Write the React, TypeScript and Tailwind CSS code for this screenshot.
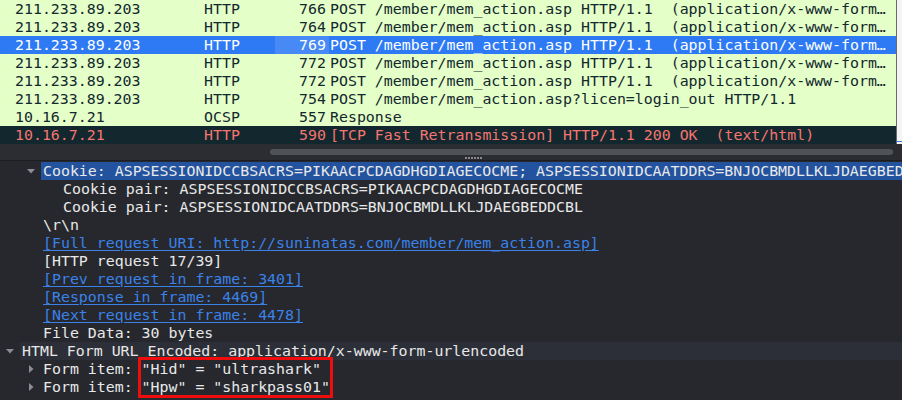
import React from "react";

type Packet = {
  src: string;
  proto: string;
  len: string;
  info: string;
  kind: "http" | "sel" | "bad";
};

const packets: Packet[] = [
  { src: "211.233.89.203", proto: "HTTP", len: "766", info: "POST /member/mem_action.asp HTTP/1.1  (application/x-www-form…", kind: "http" },
  { src: "211.233.89.203", proto: "HTTP", len: "764", info: "POST /member/mem_action.asp HTTP/1.1  (application/x-www-form…", kind: "http" },
  { src: "211.233.89.203", proto: "HTTP", len: "769", info: "POST /member/mem_action.asp HTTP/1.1  (application/x-www-form…", kind: "sel" },
  { src: "211.233.89.203", proto: "HTTP", len: "772", info: "POST /member/mem_action.asp HTTP/1.1  (application/x-www-form…", kind: "http" },
  { src: "211.233.89.203", proto: "HTTP", len: "772", info: "POST /member/mem_action.asp HTTP/1.1  (application/x-www-form…", kind: "http" },
  { src: "211.233.89.203", proto: "HTTP", len: "754", info: "POST /member/mem_action.asp?licen=login_out HTTP/1.1", kind: "http" },
  { src: "10.16.7.21", proto: "OCSP", len: "557", info: "Response", kind: "http" },
  { src: "10.16.7.21", proto: "HTTP", len: "590", info: "[TCP Fast Retransmission] HTTP/1.1 200 OK  (text/html)", kind: "bad" },
];

type Node = {
  indent: string;
  arrow?: "down" | "right";
  text: string;
  link?: boolean;
  tone?: "sel" | "group";
};

const tree: Node[] = [
  { indent: "pl-[21px]", arrow: "down", text: "Cookie: ASPSESSIONIDCCBSACRS=PIKAACPCDAGDHGDIAGECOCME; ASPSESSIONIDCAATDDRS=BNJOCBMDLLKLJDAEGBEDDCBL", tone: "sel" },
  { indent: "pl-[41px]", text: "Cookie pair: ASPSESSIONIDCCBSACRS=PIKAACPCDAGDHGDIAGECOCME" },
  { indent: "pl-[41px]", text: "Cookie pair: ASPSESSIONIDCAATDDRS=BNJOCBMDLLKLJDAEGBEDDCBL" },
  { indent: "pl-[21px]", text: "\\r\\n" },
  { indent: "pl-[21px]", text: "[Full request URI: http://suninatas.com/member/mem_action.asp]", link: true },
  { indent: "pl-[21px]", text: "[HTTP request 17/39]" },
  { indent: "pl-[21px]", text: "[Prev request in frame: 3401]", link: true },
  { indent: "pl-[21px]", text: "[Response in frame: 4469]", link: true },
  { indent: "pl-[21px]", text: "[Next request in frame: 4478]", link: true },
  { indent: "pl-[21px]", text: "File Data: 30 bytes" },
  { indent: "pl-0", arrow: "down", text: "HTML Form URL Encoded: application/x-www-form-urlencoded", tone: "group" },
  { indent: "pl-[21px]", arrow: "right", text: "Form item: \"Hid\" = \"ultrashark\"" },
  { indent: "pl-[21px]", arrow: "right", text: "Form item: \"Hpw\" = \"sharkpass01\"" },
];

function PacketRow({ p }: { p: Packet }) {
  const row =
    p.kind === "sel"
      ? "bg-[#2d7af4] text-white"
      : p.kind === "bad"
        ? "bg-[#12272e] text-[#f4766f]"
        : "bg-[#e4ffc7] text-[#12272e]";
  return (
    <div className={`flex h-[18px] items-center whitespace-pre pl-[15px] ${row}`}>
      <span className="w-[189px] shrink-0">{p.src}</span>
      <span className="w-[71px] shrink-0">{p.proto}</span>
      <span className={`flex h-full w-[54px] shrink-0 items-center justify-end pr-[3px] ${p.kind === "sel" ? "bg-[#478af5]" : ""}`}>
        {p.len}
      </span>
      <span className="min-w-0 flex-1 overflow-hidden pl-[1px]">{p.info}</span>
    </div>
  );
}

function Arrow({ dir }: { dir?: "down" | "right" }) {
  return (
    <span className="flex w-[20px] shrink-0 items-center justify-center">
      {dir === "down" && (
        <svg width="8" height="5" viewBox="0 0 8 5">
          <polygon points="0,0 8,0 4,4.5" fill="#8b8e95" />
        </svg>
      )}
      {dir === "right" && (
        <svg width="5" height="8" viewBox="0 0 5 8">
          <polygon points="0,0 4.5,4 0,8" fill="#8b8e95" />
        </svg>
      )}
    </span>
  );
}

function TreeRow({ n }: { n: Node }) {
  const bg = n.tone === "sel" ? "bg-[#23539f]" : n.tone === "group" ? "bg-[#2c2f37]" : "";
  const color = n.link ? "text-[#3b82e8] underline underline-offset-[2px]" : "text-[#e8e8e8]";
  return (
    <div className={`flex h-[18px] items-stretch whitespace-pre ${n.indent}`}>
      <Arrow dir={n.arrow} />
      <span className={`flex min-w-0 flex-1 items-center overflow-hidden pl-[2px] ${bg}`}>
        <span className={color}>{n.text}</span>
      </span>
    </div>
  );
}

export default function App() {
  return (
    <div className="h-[400px] w-[902px] overflow-hidden bg-[#26282e] font-['DejaVu_Sans_Mono',monospace] text-[14.9px] leading-[18px]">
      {/* packet list */}
      <div className="flex h-[144px]">
        <div className="min-w-0 flex-1">
          {packets.map((p, i) => (
            <PacketRow key={i} p={p} />
          ))}
        </div>
        <div className="flex w-[6px] shrink-0 flex-col justify-end border-l border-[#6b6b6b] bg-[#f4f4f4] pb-[2px]">
          <div className="h-[1px] bg-[#2d7af4]" />
        </div>
      </div>

      {/* h-scroll + splitter */}
      <div className="flex h-[17px] flex-col border-b border-[#1d1e22] bg-[#2b2d32]">
        <div className="mt-[5px] ml-[270px] h-[6px] w-[623px] rounded-full bg-[#505357]" />
        <div className="mt-[2px] ml-[465px] flex gap-[1px]">
          {[0, 1, 2, 3, 4, 5].map((d) => (
            <span key={d} className="h-[2px] w-[2px] bg-[#8a8a8a]" />
          ))}
        </div>
      </div>

      {/* details tree */}
      <div className="relative pt-[1px]">
        {tree.map((n, i) => (
          <TreeRow key={i} n={n} />
        ))}
        <div className="absolute top-[196px] left-[138px] h-[41px] w-[195px] border-[3px] border-[#ee0d0d]" />
      </div>
    </div>
  );
}
